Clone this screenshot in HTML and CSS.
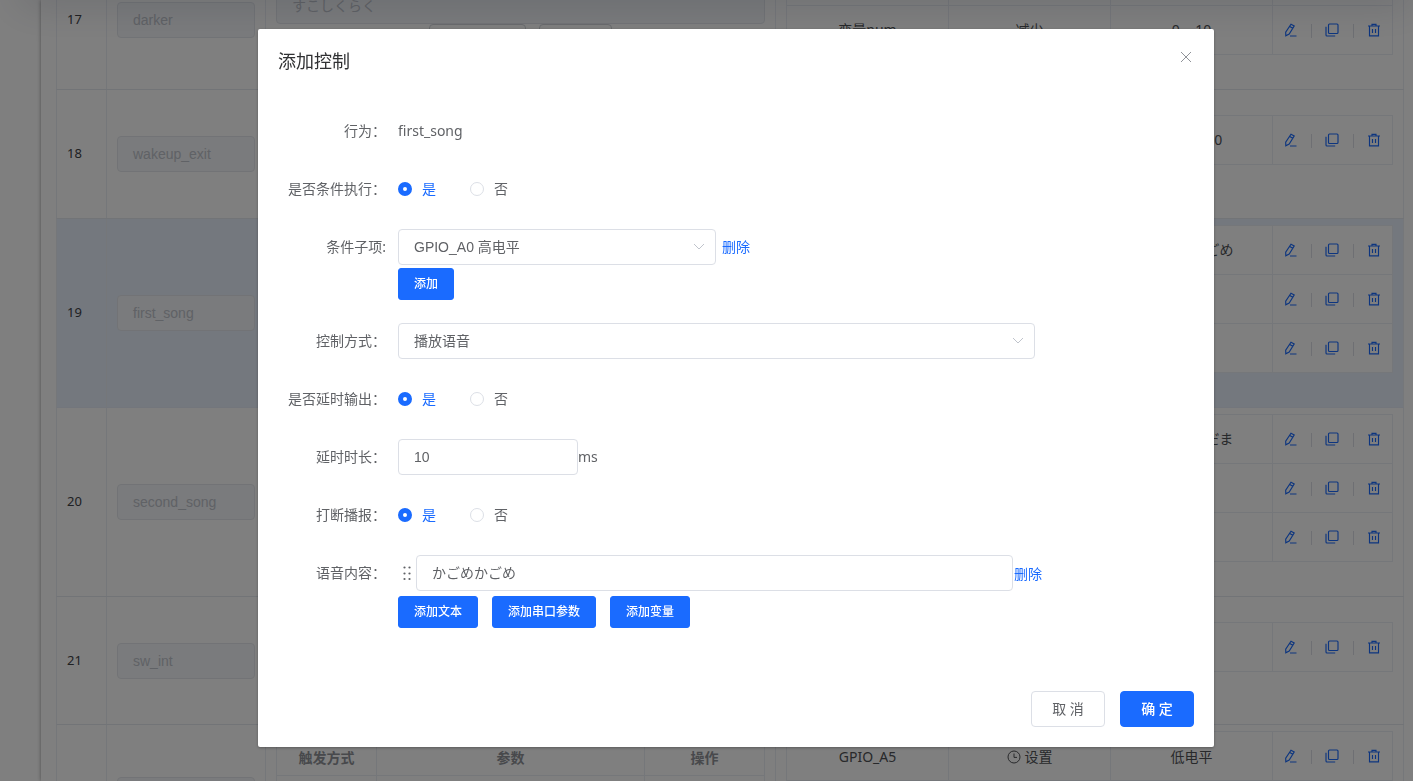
FILE: index.html
```html
<!DOCTYPE html>
<html lang="zh-CN">
<head>
<meta charset="utf-8">
<title>添加控制</title>
<link rel="stylesheet" href="styles.css">
</head>
<body>
<svg class="sprite">
  <symbol id="edit" viewBox="0 0 14 14">
    <path d="M8 1.2 L11.2 3 L6.2 11 L2.8 12.8 L2.7 9.2 Z M6.8 3.4 L9.8 5.2 M7 13 H13.5"/>
  </symbol>
  <symbol id="copy" viewBox="0 0 14 14">
    <rect x="3.5" y="1" width="9.5" height="9.5" rx="1"/>
    <path d="M1 3.8 V12 Q1 13 2 13 H10.2"/>
  </symbol>
  <symbol id="trash" viewBox="0 0 14 14">
    <path d="M1 3 H13 M2.5 3 V12.9 H11.5 V3 M5 3 V1.4 H9 V3 M5.5 6 V10 M8.5 6 V10"/>
  </symbol>
</svg>

<div class="card">
  <div class="row row-17">
    <div class="num">17</div>
    <div class="name"><div class="input disabled">darker</div></div>
    <div class="words">
      <div class="input disabled area">すこしくらく</div>
      <div class="tags"><span class="tag-a"></span><span class="tag-b"></span></div>
    </div>
    <div class="ctrl">
      <div class="sub"><div></div><div></div><div></div><div></div></div>
      <div class="sub"><div>变量num</div><div>减少</div><div>0 ~ 10</div><div class="ops"><svg><use href="#edit"/></svg><i></i><svg><use href="#copy"/></svg><i></i><svg><use href="#trash"/></svg></div></div>
    </div>
  </div>
  <div class="row row-18">
    <div class="num">18</div>
    <div class="name"><div class="input disabled">wakeup_exit</div></div>
    <div class="words"></div>
    <div class="ctrl">
      <div class="sub"><div></div><div></div><div>num = 10</div><div class="ops"><svg><use href="#edit"/></svg><i></i><svg><use href="#copy"/></svg><i></i><svg><use href="#trash"/></svg></div></div>
    </div>
  </div>
  <div class="row row-19 current">
    <div class="num">19</div>
    <div class="name"><div class="input disabled">first_song</div></div>
    <div class="words"></div>
    <div class="ctrl">
      <div class="sub"><div></div><div></div><div>かごめかごめ</div><div class="ops"><svg><use href="#edit"/></svg><i></i><svg><use href="#copy"/></svg><i></i><svg><use href="#trash"/></svg></div></div>
      <div class="sub"><div></div><div></div><div></div><div class="ops"><svg><use href="#edit"/></svg><i></i><svg><use href="#copy"/></svg><i></i><svg><use href="#trash"/></svg></div></div>
      <div class="sub"><div></div><div></div><div></div><div class="ops"><svg><use href="#edit"/></svg><i></i><svg><use href="#copy"/></svg><i></i><svg><use href="#trash"/></svg></div></div>
    </div>
  </div>
  <div class="row row-20">
    <div class="num">20</div>
    <div class="name"><div class="input disabled">second_song</div></div>
    <div class="words"></div>
    <div class="ctrl">
      <div class="sub"><div></div><div></div><div>しゃぼんだま</div><div class="ops"><svg><use href="#edit"/></svg><i></i><svg><use href="#copy"/></svg><i></i><svg><use href="#trash"/></svg></div></div>
      <div class="sub"><div></div><div></div><div></div><div class="ops"><svg><use href="#edit"/></svg><i></i><svg><use href="#copy"/></svg><i></i><svg><use href="#trash"/></svg></div></div>
      <div class="sub"><div></div><div></div><div></div><div class="ops"><svg><use href="#edit"/></svg><i></i><svg><use href="#copy"/></svg><i></i><svg><use href="#trash"/></svg></div></div>
    </div>
  </div>
  <div class="row row-21">
    <div class="num">21</div>
    <div class="name"><div class="input disabled">sw_int</div></div>
    <div class="words"></div>
    <div class="ctrl">
      <div class="sub"><div></div><div></div><div></div><div class="ops"><svg><use href="#edit"/></svg><i></i><svg><use href="#copy"/></svg><i></i><svg><use href="#trash"/></svg></div></div>
    </div>
  </div>
  <div class="row row-22">
    <div class="num"></div>
    <div class="name"><div class="input disabled"></div></div>
    <div class="words">
      <div class="trigger head"><div>触发方式</div><div>参数</div><div>操作</div></div>
      <div class="trigger"><div></div><div></div><div></div></div>
    </div>
    <div class="ctrl">
      <div class="sub"><div>GPIO_A5</div><div><svg class="clock" viewBox="0 0 14 14"><circle cx="7" cy="7" r="6"/><path d="M7 3.5 V7.4 H10"/></svg>设置</div><div>低电平</div><div class="ops"><svg><use href="#edit"/></svg><i></i><svg><use href="#copy"/></svg><i></i><svg><use href="#trash"/></svg></div></div>
      <div class="sub"><div></div><div></div><div></div><div></div></div>
    </div>
  </div>
</div>
<div class="topbar"></div>

<div class="mask">
  <div class="dialog">
    <div class="dialog-header">
      <span>添加控制</span>
      <svg class="close" viewBox="0 0 12 12"><path d="M1 1 L11 11 M11 1 L1 11"/></svg>
    </div>
    <div class="form">
      <div class="item">
        <label>行为：</label>
        <div class="content">first_song</div>
      </div>
      <div class="item">
        <label>是否条件执行：</label>
        <div class="content"><span class="radio checked">是</span><span class="radio">否</span></div>
      </div>
      <div class="item">
        <label>条件子项:</label>
        <div class="content">
          <div class="input select-sm">GPIO_A0 高电平<svg class="arrow" viewBox="0 0 12 8"><path d="M1 1 L6 6 L11 1"/></svg></div>
          <a class="del">删除</a>
        </div>
        <div class="btns add"><button class="btn small">添加</button></div>
      </div>
      <div class="item">
        <label>控制方式：</label>
        <div class="content">
          <div class="input select-lg">播放语音<svg class="arrow" viewBox="0 0 12 8"><path d="M1 1 L6 6 L11 1"/></svg></div>
        </div>
      </div>
      <div class="item">
        <label>是否延时输出：</label>
        <div class="content"><span class="radio checked">是</span><span class="radio">否</span></div>
      </div>
      <div class="item">
        <label>延时时长：</label>
        <div class="content"><div class="input delay">10</div>ms</div>
      </div>
      <div class="item">
        <label>打断播报：</label>
        <div class="content"><span class="radio checked">是</span><span class="radio">否</span></div>
      </div>
      <div class="item">
        <label>语音内容：</label>
        <div class="content">
          <svg class="drag" viewBox="0 0 18 16"><circle cx="6.5" cy="2.5" r="1.1"/><circle cx="11.5" cy="2.5" r="1.1"/><circle cx="6.5" cy="8.5" r="1.1"/><circle cx="11.5" cy="8.5" r="1.1"/><circle cx="6.5" cy="14" r="1.1"/><circle cx="11.5" cy="14" r="1.1"/></svg>
          <div class="input voice">かごめかごめ</div>
          <a class="del near">删除</a>
        </div>
        <div class="btns texts"><button class="btn small">添加文本</button><button class="btn small">添加串口参数</button><button class="btn small">添加变量</button></div>
      </div>
    </div>
    <div class="dialog-footer">
      <button class="btn plain">取 消</button>
      <button class="btn">确 定</button>
    </div>
  </div>
</div>
</body>
</html>
```

FILE: styles.css
```css
*, *::before {box-sizing: border-box;}

body {
  margin: 0;
  height: 781px;
  overflow: hidden;
  background: #fff;
  color: #606266;
  font-family: "Noto Sans", "Noto Sans CJK SC", sans-serif;
  font-size: 14px;
}

.sprite {
  display: none;
}

svg {
  fill: none;
  stroke: currentColor;
  flex: none;
}

/* table behind the dialog */
.card {
  margin-left: 41px;
  height: 781px;
  padding: 0 9px 0 15px;
  overflow: hidden;
  box-shadow: 0 0 4px rgba(0, 0, 0, .4);
}

.row {
  display: grid;
  grid-template-columns: 50px 159px 510px 628px;
  width: 1348px;
  border-left: 1px solid #ebeef5;
  border-bottom: 1px solid #e4e8ef;
}

.row > div {
  border-right: 1px solid #ebeef5;
  min-width: 0;
}

.row-17 {height: 139px; margin-top: -49px;}
.row-18 {height: 129px;}
.row-19 {height: 189px;}
.row-20 {height: 189px;}
.row-21 {height: 128px;}
.row-22 {height: 140px;}

.current {
  background: #e8f0fd;
  border-bottom-color: #e6edf8;
}

.row .num {
  display: flex;
  align-items: center;
  padding: 0 0 2px 10px;
  color: #404246;
  font-size: 13px;
}

.name {
  display: flex;
  align-items: center;
  padding: 0 10px;
}

.input {
  display: flex;
  align-items: center;
  width: 138px;
  height: 36px;
  padding: 0 15px;
  border: 1px solid #dcdfe6;
  border-radius: 4px;
  background: #fff;
  font-family: "Liberation Sans", "Noto Sans CJK SC", sans-serif;
  font-size: 14px;
  line-height: 34px;
}

.disabled {
  background: #f5f7fa;
  border-color: #e4e7ed;
  color: #c0c4cc;
}

.words {
  padding: 6px 10px 0;
}

.area {
  width: 489px;
  height: 67px;
  align-items: flex-end;
  padding-bottom: 7px;
  line-height: 20px;
}

.tags {
  display: flex;
  gap: 13px;
  padding-left: 153px;
}

.tags span {
  height: 30px;
  border: 1px solid #d3d6dc;
  border-radius: 4px;
}

.tag-a {width: 97px;}
.tag-b {width: 73px;}

.ctrl {
  padding: 6px 10px 0;
}

.row-17 .ctrl {padding-top: 5px;}
.row-18 .ctrl, .row-21 .ctrl {padding-top: 25px;}

.sub {
  display: grid;
  grid-template-columns: 163px 162px 162px 120px;
  width: 607px;
  height: 49px;
  line-height: 46px;
  background: #fff;
  border-top: 1px solid #ebeef5;
  color: #505256;
}

.sub:last-child {
  height: 50px;
  border-bottom: 1px solid #ebeef5;
}

.sub > div {
  display: flex;
  align-items: center;
  justify-content: center;
  border-right: 1px solid #ebeef5;
}

.sub > div:first-child {
  border-left: 1px solid #ebeef5;
}

.row-22 .sub > div:not(.ops) {
  padding-top: 2px;
}

.sub > .ops {
  gap: 13.5px;
  padding-right: 1px;
  color: #1a6bff;
}

.ops svg {
  width: 14px;
  height: 14px;
  stroke-width: 1.15;
}

.ops i {
  width: 1px;
  height: 14px;
  margin-top: 2px;
  background: #dcdfe6;
}

.clock {
  width: 14px;
  height: 14px;
  margin-right: 4px;
}

.trigger {
  display: grid;
  grid-template-columns: 101px 268px 120px;
  height: 44px;
  border-top: 1px solid #ebeef5;
}

.trigger > div {
  display: flex;
  align-items: center;
  justify-content: center;
  border-right: 1px solid #ebeef5;
}

.trigger > div:first-child {
  border-left: 1px solid #ebeef5;
}

.head > div {
  padding-top: 6px;
  color: #909399;
  font-weight: bold;
}

.topbar {
  position: absolute;
  top: -20px;
  left: 20px;
  right: 0;
  height: 20px;
  box-shadow: 0 0 40px rgba(40, 50, 80, .27);
}

/* dialog */
.mask {
  position: fixed;
  inset: 0;
  padding-top: 29px;
  background: rgba(0, 0, 0, .5);
}

.dialog {
  display: flex;
  flex-direction: column;
  width: 956px;
  height: 718px;
  margin-left: 258px;
  padding: 20px;
  background: #fff;
  border-radius: 2px;
  box-shadow: 0 1px 3px rgba(0, 0, 0, .3);
}

.dialog-header {
  display: flex;
  justify-content: space-between;
  height: 64px;
  color: #303133;
  font-size: 18px;
  line-height: 24px;
}

.close {
  width: 12px;
  height: 12px;
  margin: 2px 2px 0 0;
  color: #909399;
}

.item {
  display: grid;
  grid-template-columns: 108px 1fr;
  column-gap: 12px;
  margin-bottom: 22px;
}

.item label {
  line-height: 36px;
  text-align: right;
  white-space: nowrap;
}

.content {
  display: flex;
  align-items: center;
  height: 36px;
  line-height: 34px;
}

.select-sm {width: 318px;}
.select-lg {width: 637px;}
.delay {width: 180px;}
.voice {width: 597px;}

.arrow {
  width: 12px;
  height: 8px;
  margin-left: auto;
  margin-right: -5px;
  color: #c0c4cc;
}

.drag {
  width: 18px;
  height: 16px;
  fill: #606266;
  stroke: none;
}

.del {
  margin-left: 6px;
  color: #1a6bff;
}

.del.near {
  margin-left: 1px;
  padding-top: 2px;
}

.radio {
  display: flex;
  align-items: center;
  gap: 10px;
  margin-right: 34px;
}

.radio::before {
  content: "";
  width: 14px;
  height: 14px;
  border: 1px solid #dcdfe6;
  border-radius: 50%;
}

.checked {
  color: #1a6bff;
}

.checked::before {
  border: 5px solid #1a6bff;
  background: #fff;
}

.btns {
  grid-column: 2;
  display: flex;
  gap: 14px;
}

.add {
  padding: 3px 0 1px;
}

.texts {
  padding-top: 5px;
}

.btn {
  width: 74px;
  height: 36px;
  padding: 0 0 2px;
  border: 1px solid #1a6bff;
  border-radius: 4px;
  background: #1a6bff;
  color: #fff;
  font-family: inherit;
  font-size: 14px;
  font-weight: 500;
}

.small {
  width: auto;
  height: 32px;
  padding: 0 15px 2px;
  border-radius: 3px;
  font-size: 12px;
}

.plain {
  background: #fff;
  border-color: #dcdfe6;
  color: #606266;
  font-weight: normal;
}

.dialog-footer {
  display: flex;
  justify-content: flex-end;
  gap: 15px;
  margin-top: auto;
}
```
